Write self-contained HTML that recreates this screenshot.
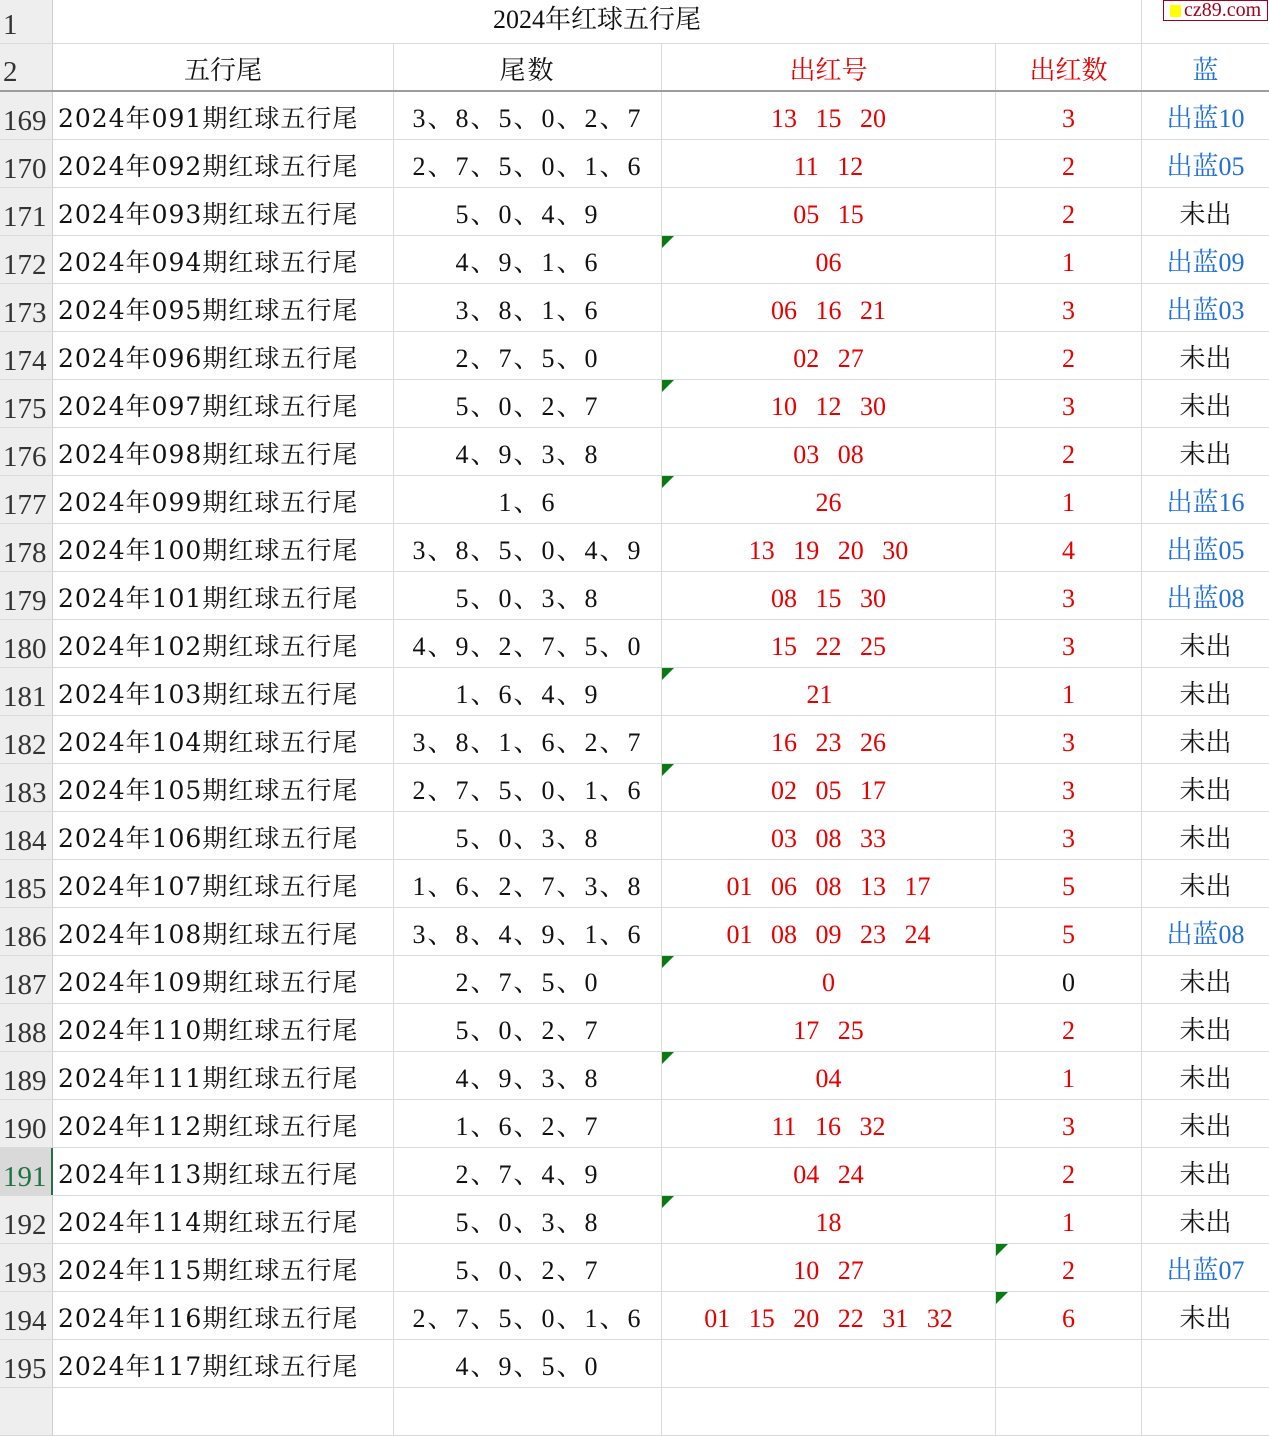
<!DOCTYPE html>
<html><head><meta charset="utf-8"><style>
body{margin:0;width:1269px;height:1393px;overflow:hidden;background:#fff;font-family:"Liberation Serif","Noto Serif CJK SC",serif;}
.row{display:flex;height:48px;box-sizing:border-box;border-bottom:1px solid #dadada}
.row>div{box-sizing:border-box;border-right:1px solid #dadada;height:100%;text-align:center;font-size:26px;line-height:46px;padding-top:4px;white-space:nowrap;position:relative;color:#111}
.row>div:nth-child(1){width:53px;background:#eeeeee;color:#333;text-align:left;padding-left:3px;font-size:29px;line-height:1;display:flex;align-items:flex-end;padding-bottom:3px;border-right-color:#cfcfcf}
.row>div:nth-child(2){width:341px;text-align:left;padding-left:5px;font-family:"DejaVu Serif","Noto Serif CJK SC",serif;font-size:25px;letter-spacing:1px}
.row>div:nth-child(3){width:268px;letter-spacing:2px}
.row>div:nth-child(4){width:334px;word-spacing:12px}
.row>div:nth-child(5){width:146px}
.row>div:nth-child(6){width:127px;border-right:none}
.r{color:#e60000!important}.b{color:#1f6fd8!important}
.t:before{content:"";position:absolute;left:0;top:0;border-top:12px solid #0a7a12;border-right:12px solid transparent}
.sel{background:#d9d9d9!important;color:#217346!important;border-right:2px solid #217346!important}
#logo{position:absolute;left:1163px;top:0;width:103px;height:19px;border:1px solid #a0001e;background:#fff;color:#a0001e;font-size:20px;line-height:18px;white-space:nowrap;overflow:hidden}
#logo i{display:inline-block;width:11px;height:12px;background:#ffff00;margin:0 3px 0 6px;vertical-align:-1px}
</style></head><body>
<div class="row" style="height:44px"><div>1</div><div style="width:1089px;text-align:center;font-family:'Liberation Serif','Noto Serif CJK SC',serif;font-size:26px;letter-spacing:0;line-height:40px;padding:0">2024年红球五行尾</div><div style="width:127px;border-right:none"></div></div>
<div class="row" style="border-bottom:2px solid #9c9c9c"><div>2</div><div style="text-align:center;font-family:'Liberation Serif','Noto Serif CJK SC',serif;font-size:26px;letter-spacing:0;padding-left:0">五行尾</div><div>尾数</div><div class="r">出红号</div><div class="r">出红数</div><div class="b">蓝</div></div>
<div class="row"><div>169</div><div>2024年091期红球五行尾</div><div>3、8、5、0、2、7</div><div class="r">13 15 20</div><div class="r">3</div><div class="b">出蓝10</div></div>
<div class="row"><div>170</div><div>2024年092期红球五行尾</div><div>2、7、5、0、1、6</div><div class="r">11 12</div><div class="r">2</div><div class="b">出蓝05</div></div>
<div class="row"><div>171</div><div>2024年093期红球五行尾</div><div>5、0、4、9</div><div class="r">05 15</div><div class="r">2</div><div>未出</div></div>
<div class="row"><div>172</div><div>2024年094期红球五行尾</div><div>4、9、1、6</div><div class="r t">06</div><div class="r">1</div><div class="b">出蓝09</div></div>
<div class="row"><div>173</div><div>2024年095期红球五行尾</div><div>3、8、1、6</div><div class="r">06 16 21</div><div class="r">3</div><div class="b">出蓝03</div></div>
<div class="row"><div>174</div><div>2024年096期红球五行尾</div><div>2、7、5、0</div><div class="r">02 27</div><div class="r">2</div><div>未出</div></div>
<div class="row"><div>175</div><div>2024年097期红球五行尾</div><div>5、0、2、7</div><div class="r t">10 12 30</div><div class="r">3</div><div>未出</div></div>
<div class="row"><div>176</div><div>2024年098期红球五行尾</div><div>4、9、3、8</div><div class="r">03 08</div><div class="r">2</div><div>未出</div></div>
<div class="row"><div>177</div><div>2024年099期红球五行尾</div><div>1、6</div><div class="r t">26</div><div class="r">1</div><div class="b">出蓝16</div></div>
<div class="row"><div>178</div><div>2024年100期红球五行尾</div><div>3、8、5、0、4、9</div><div class="r">13 19 20 30</div><div class="r">4</div><div class="b">出蓝05</div></div>
<div class="row"><div>179</div><div>2024年101期红球五行尾</div><div>5、0、3、8</div><div class="r">08 15 30</div><div class="r">3</div><div class="b">出蓝08</div></div>
<div class="row"><div>180</div><div>2024年102期红球五行尾</div><div>4、9、2、7、5、0</div><div class="r">15 22 25</div><div class="r">3</div><div>未出</div></div>
<div class="row"><div>181</div><div>2024年103期红球五行尾</div><div>1、6、4、9</div><div class="r t" style="padding-right:18px">21</div><div class="r">1</div><div>未出</div></div>
<div class="row"><div>182</div><div>2024年104期红球五行尾</div><div>3、8、1、6、2、7</div><div class="r">16 23 26</div><div class="r">3</div><div>未出</div></div>
<div class="row"><div>183</div><div>2024年105期红球五行尾</div><div>2、7、5、0、1、6</div><div class="r t">02 05 17</div><div class="r">3</div><div>未出</div></div>
<div class="row"><div>184</div><div>2024年106期红球五行尾</div><div>5、0、3、8</div><div class="r">03 08 33</div><div class="r">3</div><div>未出</div></div>
<div class="row"><div>185</div><div>2024年107期红球五行尾</div><div>1、6、2、7、3、8</div><div class="r">01 06 08 13 17</div><div class="r">5</div><div>未出</div></div>
<div class="row"><div>186</div><div>2024年108期红球五行尾</div><div>3、8、4、9、1、6</div><div class="r">01 08 09 23 24</div><div class="r">5</div><div class="b">出蓝08</div></div>
<div class="row"><div>187</div><div>2024年109期红球五行尾</div><div>2、7、5、0</div><div class="r t">0</div><div>0</div><div>未出</div></div>
<div class="row"><div>188</div><div>2024年110期红球五行尾</div><div>5、0、2、7</div><div class="r">17 25</div><div class="r">2</div><div>未出</div></div>
<div class="row"><div>189</div><div>2024年111期红球五行尾</div><div>4、9、3、8</div><div class="r t">04</div><div class="r">1</div><div>未出</div></div>
<div class="row"><div>190</div><div>2024年112期红球五行尾</div><div>1、6、2、7</div><div class="r">11 16 32</div><div class="r">3</div><div>未出</div></div>
<div class="row"><div class="sel">191</div><div>2024年113期红球五行尾</div><div>2、7、4、9</div><div class="r">04 24</div><div class="r">2</div><div>未出</div></div>
<div class="row"><div>192</div><div>2024年114期红球五行尾</div><div>5、0、3、8</div><div class="r t">18</div><div class="r">1</div><div>未出</div></div>
<div class="row"><div>193</div><div>2024年115期红球五行尾</div><div>5、0、2、7</div><div class="r">10 27</div><div class="r t">2</div><div class="b">出蓝07</div></div>
<div class="row"><div>194</div><div>2024年116期红球五行尾</div><div>2、7、5、0、1、6</div><div class="r">01 15 20 22 31 32</div><div class="r t">6</div><div>未出</div></div>
<div class="row"><div>195</div><div>2024年117期红球五行尾</div><div>4、9、5、0</div><div></div><div></div><div></div></div>
<div class="row"><div></div><div></div><div></div><div></div><div></div><div></div></div>
<div id="logo"><i></i>cz89.com</div>
</body></html>
